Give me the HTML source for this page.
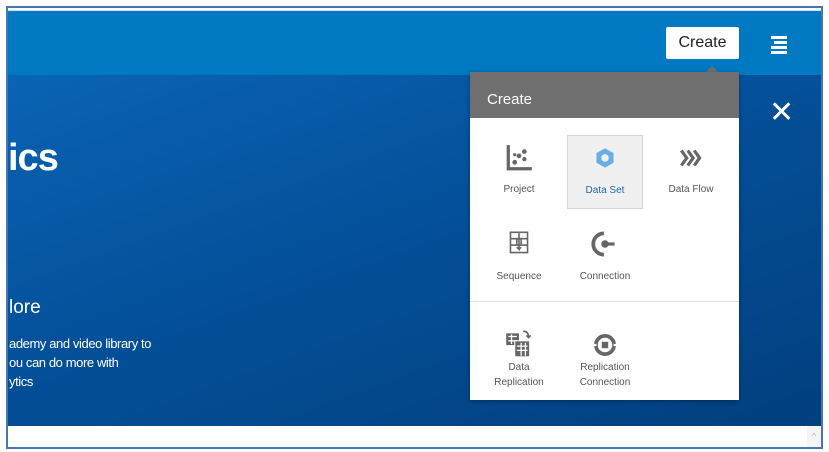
<!DOCTYPE html>
<html><head><style>
body{margin:0;width:829px;height:452px;background:#fff;position:relative;overflow:hidden;font-family:"Liberation Sans",sans-serif}
.frame{position:absolute;left:6px;top:6px;width:813px;height:439px;border:2px solid #4a74b8;box-sizing:content-box;overflow:hidden}
.top{position:absolute;left:0;top:2px;width:100%;height:65px;background:#0079c2;border-top:1px solid #cfe3f5}
.hero{position:absolute;left:0;top:67px;width:100%;height:351px;background:linear-gradient(160deg,#0a64b4 0%,#04509a 45%,#023f7e 100%)}
.btn{position:absolute;left:658px;top:19px;width:73px;height:32px;background:#fff;border-radius:2px;font-size:16px;color:#222;text-align:center;line-height:32px}
.hb{position:absolute;left:763px;top:28px;width:16px}
.hb i{display:block;height:3px;background:#fff;margin-bottom:2px;margin-left:auto}
.pop{position:absolute;left:462px;top:64px;width:269px;height:328px;background:#fff;box-shadow:0 1px 4px rgba(0,0,0,.35)}
.ph{height:46px;background:#6f6f6f;color:#fff;font-size:15px;line-height:56px;padding-left:17px;box-sizing:border-box}
.arrow{position:absolute;left:698px;top:58px;width:0;height:0;border-left:6px solid transparent;border-right:6px solid transparent;border-bottom:6px solid #6f6f6f}
.it{position:absolute;width:76px;text-align:center;font-size:10px;color:#555;line-height:15px}
.it svg{display:block;margin:0 auto 4px}
.r svg{margin-bottom:9px}
.sel{background:#f0f0f0;border:1px solid #d3d3d3;color:#1d6aa8}
.div{position:absolute;left:0;top:229px;width:100%;height:1px;background:#ddd}
.x{position:absolute;left:761px;top:90px;color:#fff;font-size:30px;line-height:30px}
.ht{position:absolute;color:#fff}
</style></head><body>
<div class="frame">
<div class="top"></div>
<div class="hero">
<div class="ht" style="left:0px;top:62px;font-size:38px;font-weight:bold;letter-spacing:-1px">ics</div>
<div class="ht" style="left:1px;top:222px;font-size:19px">lore</div>
<div class="ht" style="left:1px;top:259px;font-size:13px;line-height:19px;letter-spacing:-0.4px">ademy and video library to<br>ou can do more with<br>ytics</div>
</div>
<div class="btn">Create</div>
<div class="hb"><i style="width:16px"></i><i style="width:13px"></i><i style="width:16px"></i><i style="width:16px"></i></div>
<div class="arrow"></div>
<div class="x">✕</div>
<div class="pop">
<div class="ph">Create</div>
<div class="it r" style="left:11px;top:71px"><svg width="30" height="30" viewBox="0 0 26 28"><path d="M3 2v22h22" stroke="#666" stroke-width="3" fill="none"/><circle cx="9" cy="18" r="2.2" fill="#666"/><circle cx="13" cy="12" r="2.2" fill="#666"/><circle cx="18" cy="8" r="2.2" fill="#666"/><circle cx="18" cy="15" r="2" fill="#666"/><circle cx="9" cy="11" r="1.5" fill="#666"/></svg>Project</div>
<div class="it sel r" style="left:97px;top:63px;height:74px;padding-top:8px;box-sizing:border-box"><svg width="30" height="30" viewBox="0 0 26 28"><path d="M13 4l8 4.5v9L13 22l-8-4.5v-9z" fill="#6aaee6"/><circle cx="13" cy="13" r="3.5" fill="#f0f0f0"/></svg>Data Set</div>
<div class="it r" style="left:183px;top:71px"><svg width="30" height="30" viewBox="0 0 26 28"><path d="M4 7l5 7-5 7M10 7l5 7-5 7M16 7l5 7-5 7" stroke="#666" stroke-width="3" fill="none"/></svg>Data Flow</div>
<div class="it r" style="left:11px;top:156px"><svg width="30" height="32" viewBox="0 0 26 30"><path d="M5 4h16v6H5zM5 10h6v6H5zM15 10h6v6h-6zM5 16h16v7H5z" stroke="#666" stroke-width="1.5" fill="none"/><path d="M13 5v15l-2-2m2 2l2-2" stroke="#666" stroke-width="1.5" fill="none"/></svg>Sequence</div>
<div class="it r" style="left:97px;top:156px"><svg width="30" height="32" viewBox="0 0 26 30"><path d="M12 5A9 9 0 0 0 12 25" stroke="#666" stroke-width="3.5" fill="none"/><circle cx="13" cy="15" r="3.5" fill="#666"/><path d="M13 15h9" stroke="#666" stroke-width="3"/></svg>Connection</div>
<div class="div"></div>
<div class="it" style="left:11px;top:256px"><svg width="32" height="32" viewBox="0 0 30 30"><rect x="3" y="5" width="12" height="11" fill="#666"/><path d="M5 8h8M5 12h8M8 6v9" stroke="#fff" stroke-width="1.2"/><rect x="11" y="12" width="14" height="15" fill="#666" stroke="#fff"/><path d="M13 17h10M13 21h10M17 14v12M21 14v12" stroke="#fff" stroke-width="1.2"/><path d="M19 3q5 0 5 6m-2-2l2 2 2-2" stroke="#666" stroke-width="1.5" fill="none"/></svg><span style="display:block;margin-top:-4px">Data<br>Replication</span></div>
<div class="it" style="left:97px;top:258px"><svg width="30" height="30" viewBox="0 0 28 28"><circle cx="14" cy="14" r="8.5" stroke="#666" stroke-width="3.5" fill="none"/><rect x="11" y="11" width="6" height="6" fill="#666"/><path d="M3 14h3M22 14h3" stroke="#fff" stroke-width="2"/></svg><span style="display:block;margin-top:-4px">Replication<br>Connection</span></div>
</div>
<div style="position:absolute;right:0;top:418px;width:14px;height:21px;background:#f4f4f4;color:#bbb;font-size:9px;text-align:center;line-height:21px">^</div>
</div>
</body></html>
